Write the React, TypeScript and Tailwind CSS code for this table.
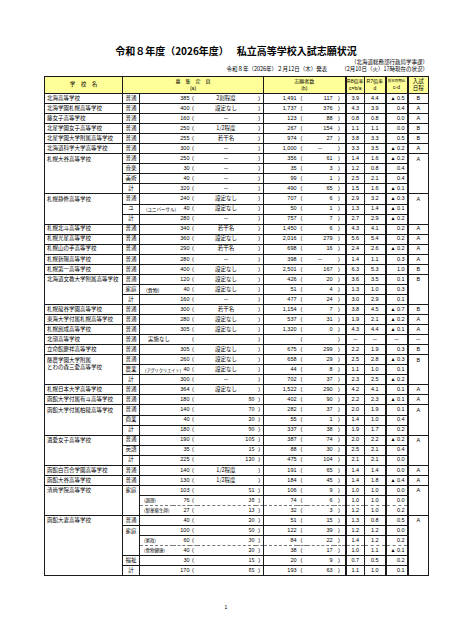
import React from "react";

type Row = {
  course?: string;
  courseSpan?: number;
  skipCourse?: boolean;
  note?: string;
  noteCls?: string;
  cap: string;
  capNote: string;
  capNum?: boolean;
  app: string;
  appSub: string;
  c: string;
  d: string;
  cd: string;
  dashed?: boolean;
};
type Group = { name: string[]; exam: string; rows: Row[] };

const r = (
  course: string | undefined,
  cap: string,
  capNote: string,
  app: string,
  appSub: string,
  c: string,
  d: string,
  cd: string,
  ex: Partial<Row> = {}
): Row => ({
  course,
  cap,
  capNote,
  capNum: /^\d+$/.test(capNote),
  app,
  appSub,
  c,
  d,
  cd,
  ...ex,
});

const SUB = "text-[4.5px] pl-[4px]";
const NOTE = "text-[4.5px] pl-[6px]";

const groups: Group[] = [
  { name: ["北海高等学校"], exam: "B", rows: [r("普通", "385", "2割程度", "1,491", "117", "3.9", "4.4", "▲ 0.5")] },
  { name: ["北海学園札幌高等学校"], exam: "A", rows: [r("普通", "400", "設定なし", "1,737", "376", "4.3", "3.9", "0.4")] },
  { name: ["藤女子高等学校"], exam: "A", rows: [r("普通", "160", "－", "123", "88", "0.8", "0.8", "0.0")] },
  { name: ["北星学園女子高等学校"], exam: "B", rows: [r("普通", "250", "1/2程度", "267", "154", "1.1", "1.1", "0.0")] },
  { name: ["北星学園大学附属高等学校"], exam: "B", rows: [r("普通", "255", "若干名", "974", "27", "3.8", "3.3", "0.5")] },
  { name: ["北海道科学大学高等学校"], exam: "A", rows: [r("普通", "300", "－", "1,000", "－", "3.3", "3.5", "▲ 0.2")] },
  {
    name: ["札幌大谷高等学校"],
    exam: "A",
    rows: [
      r("普通", "250", "－", "356", "61", "1.4", "1.6", "▲ 0.2"),
      r("音楽", "30", "－", "35", "3", "1.2", "0.8", "0.4"),
      r("美術", "40", "－", "99", "1", "2.5", "2.1", "0.4"),
      r("計", "320", "－", "490", "65", "1.5", "1.6", "▲ 0.1"),
    ],
  },
  {
    name: ["札幌静修高等学校"],
    exam: "A",
    rows: [
      r("普通", "240", "設定なし", "707", "6", "2.9", "3.2", "▲ 0.3"),
      r("ユ", "40", "設定なし", "50", "1", "1.3", "1.4", "▲ 0.1", { note: "(ユニバーサル)", noteCls: NOTE }),
      r("計", "280", "－", "757", "7", "2.7", "2.9", "▲ 0.2"),
    ],
  },
  { name: ["札幌北斗高等学校"], exam: "A", rows: [r("普通", "340", "若干名", "1,450", "6", "4.3", "4.1", "0.2")] },
  { name: ["札幌光星高等学校"], exam: "A", rows: [r("普通", "360", "設定なし", "2,016", "279", "5.6", "5.4", "0.2")] },
  { name: ["札幌山の手高等学校"], exam: "A", rows: [r("普通", "290", "若干名", "698", "16", "2.4", "2.6", "▲ 0.2")] },
  { name: ["札幌新陽高等学校"], exam: "A", rows: [r("普通", "280", "－", "398", "－", "1.4", "1.1", "0.3")] },
  { name: ["札幌第一高等学校"], exam: "B", rows: [r("普通", "400", "設定なし", "2,501", "167", "6.3", "5.3", "1.0")] },
  {
    name: ["北海道文教大学附属高等学校"],
    exam: "B",
    rows: [
      r("普通", "120", "設定なし", "426", "20", "3.6", "3.5", "0.1"),
      r("家庭", "40", "設定なし", "51", "4", "1.3", "1.0", "0.3", { note: "(食物)", noteCls: "text-[5px] pl-[6px]" }),
      r("計", "160", "－", "477", "24", "3.0", "2.9", "0.1"),
    ],
  },
  { name: ["札幌龍谷学園高等学校"], exam: "B", rows: [r("普通", "300", "若干名", "1,154", "7", "3.8", "4.5", "▲ 0.7")] },
  { name: ["東海大学付属札幌高等学校"], exam: "A", rows: [r("普通", "280", "設定なし", "537", "31", "1.9", "2.1", "▲ 0.2")] },
  { name: ["札幌創成高等学校"], exam: "A", rows: [r("普通", "305", "設定なし", "1,320", "0", "4.3", "4.4", "▲ 0.1")] },
  {
    name: ["北嶺高等学校"],
    exam: "－",
    rows: [r("普通", "", "", "", "", "－", "－", "－", { note: "実施なし", noteCls: "text-[5.5px] pl-[8px]" })],
  },
  { name: ["立命館慶祥高等学校"], exam: "B", rows: [r("普通", "305", "設定なし", "675", "299", "2.2", "1.9", "0.3")] },
  {
    name: ["酪農学園大学附属", "とわの森三愛高等学校"],
    exam: "B",
    rows: [
      r("普通", "260", "設定なし", "658", "29", "2.5", "2.8", "▲ 0.3"),
      r("農業", "40", "設定なし", "44", "8", "1.1", "1.0", "0.1", { note: "(アグリクリエイト)", noteCls: "text-[4.2px] pl-[5px]" }),
      r("計", "300", "－", "702", "37", "2.3", "2.5", "▲ 0.2"),
    ],
  },
  { name: ["札幌日本大学高等学校"], exam: "A", rows: [r("普通", "364", "設定なし", "1,522", "290", "4.2", "4.1", "0.1")] },
  { name: ["函館大学付属有斗高等学校"], exam: "A", rows: [r("普通", "180", "80", "402", "90", "2.2", "2.3", "▲ 0.1")] },
  {
    name: ["函館大学付属柏稜高等学校"],
    exam: "A",
    rows: [
      r("普通", "140", "70", "282", "37", "2.0", "1.9", "0.1"),
      r("商業", "40", "20", "55", "1", "1.4", "1.0", "0.4"),
      r("計", "180", "90", "337", "38", "1.9", "1.7", "0.2"),
    ],
  },
  {
    name: ["遺愛女子高等学校"],
    exam: "A",
    rows: [
      r("普通", "190", "105", "387", "74", "2.0", "2.2", "▲ 0.2"),
      r("英語", "35", "15", "88", "30", "2.5", "2.1", "0.4"),
      r("計", "225", "120", "475", "104", "2.1", "2.1", "0.0"),
    ],
  },
  { name: ["函館白百合学園高等学校"], exam: "A", rows: [r("普通", "140", "1/2程度", "191", "65", "1.4", "1.4", "0.0")] },
  { name: ["函館大谷高等学校"], exam: "A", rows: [r("普通", "130", "1/2程度", "184", "45", "1.4", "1.8", "▲ 0.4")] },
  {
    name: ["清尚学院高等学校"],
    exam: "A",
    rows: [
      r("家庭", "103", "51", "106", "9", "1.0", "1.0", "0.0", { courseSpan: 3 }),
      r(undefined, "76", "38", "74", "6", "1.0", "1.0", "0.0", { skipCourse: true, note: "(調理)", noteCls: SUB }),
      r(undefined, "27", "13", "32", "3", "1.2", "1.0", "0.2", { skipCourse: true, note: "(製菓衛生師)", noteCls: SUB, dashed: true }),
    ],
  },
  {
    name: ["函館大妻高等学校"],
    exam: "A",
    rows: [
      r("普通", "40", "20", "51", "15", "1.3", "0.8", "0.5"),
      r("家庭", "100", "50", "122", "39", "1.2", "1.2", "0.0", { courseSpan: 3 }),
      r(undefined, "60", "30", "84", "22", "1.4", "1.2", "0.2", { skipCourse: true, note: "(家政)", noteCls: SUB }),
      r(undefined, "40", "20", "38", "17", "1.0", "1.1", "▲ 0.1", { skipCourse: true, note: "(食物健康)", noteCls: SUB, dashed: true }),
      r("福祉", "30", "15", "20", "9", "0.7", "0.5", "0.2"),
      r("計", "170", "85", "193", "63", "1.1", "1.0", "0.1"),
    ],
  },
];

const widths = [78, 17, 33, 17, 7, 59, 8, 33, 10, 27, 12, 19, 21, 22, 21];

const B = "border-[#1a1a1a]";

export default function App() {
  return (
    <div className="w-[452px] h-[640px] bg-white text-black font-['Liberation_Sans','Noto_Sans_CJK_JP',sans-serif] overflow-hidden">
      <div className="ml-[44px] w-[384px] pt-[45px]">
        <div className="flex justify-center text-[10px] leading-[12px] font-bold font-['Noto_Sans_CJK_JP',sans-serif]">
          <span>令和８年度（2026年度）</span>
          <span className="ml-[8px]">私立高等学校入試志願状況</span>
        </div>
        <div className="mt-[1.5px] flex flex-col items-end text-[5.5px] leading-[7px] font-['Noto_Sans_CJK_JP',sans-serif]">
          <div>（北海道総務部行政局学事課）</div>
          <div className="flex">
            <span>令和８年（2026年）２月12日（木）発表</span>
            <span className="ml-[14px]">（2月10日（火）17時現在の状況）</span>
          </div>
        </div>
        <table className={`mt-[3.5px] w-[384px] table-fixed border-collapse border ${B} text-[5.5px] leading-none`}>
          <colgroup>
            {widths.map((w, i) => (
              <col key={i} style={{ width: w }} />
            ))}
          </colgroup>
          <thead>
            <tr className="h-[17px] bg-[#ffff99]">
              <th className={`border ${B} font-normal text-[5.5px] p-0`}>学　校　名</th>
              <th colSpan={6} className={`border ${B} font-normal text-[5px] p-0`}>
                <div>募　集　定　員</div>
                <div className="mt-[2px]">(a)</div>
              </th>
              <th colSpan={4} className={`border ${B} font-normal text-[5px] p-0`}>
                <div>志願者数</div>
                <div className="mt-[2px]">(b)</div>
              </th>
              <th className={`border-l-2 border-y ${B} font-normal text-[5px] p-0`}>
                <div>R8倍率</div>
                <div className="mt-[2px]">c=b/a</div>
              </th>
              <th className={`border ${B} font-normal text-[5px] p-0`}>
                <div>R7倍率</div>
                <div className="mt-[2px]">d</div>
              </th>
              <th className={`border-l-2 border-y ${B} font-normal p-0 whitespace-nowrap`}>
                <div className="text-[3.5px]">前年同期比</div>
                <div className="mt-[2px] text-[5px]">c-d</div>
              </th>
              <th className={`border-l-2 border-y border-r ${B} font-normal text-[5.5px] p-0`}>
                <div>入試</div>
                <div className="mt-[2px]">日程</div>
              </th>
            </tr>
          </thead>
          <tbody>
            {groups.map((g, gi) =>
              g.rows.map((row, ri) => {
                const nextDashed = g.rows[ri + 1]?.dashed;
                const ds =
                  (row.dashed ? " [border-top-style:dashed] border-t-[#777]" : "") +
                  (nextDashed ? " [border-bottom-style:dashed] border-b-[#777]" : "");
                const base = `border-y ${B} p-0 align-middle whitespace-nowrap overflow-visible${ds}`;
                const multi = g.rows.length > 1;
                return (
                  <tr key={`${gi}-${ri}`} className="h-[10.05px]">
                    {ri === 0 && (
                      <td
                        rowSpan={g.rows.length}
                        className={`border ${B} p-0 pl-[2px] whitespace-nowrap font-['Noto_Sans_CJK_JP',sans-serif] ${
                          multi ? "align-top pt-[2.5px]" : "align-middle"
                        }`}
                      >
                        {g.name.map((n, k) => (
                          <div key={k} className={k > 0 ? "mt-[1.5px]" : ""}>
                            {n}
                          </div>
                        ))}
                      </td>
                    )}
                    {!row.skipCourse && (
                      <td
                        rowSpan={row.courseSpan ?? 1}
                        className={`${base} border-x text-center font-['Noto_Sans_CJK_JP',sans-serif] ${
                          row.courseSpan ? "align-top pt-[2.5px]" : ""
                        }`}
                      >
                        {row.course}
                      </td>
                    )}
                    <td className={`${base} border-l text-left font-['Noto_Sans_CJK_JP',sans-serif] ${row.noteCls ?? ""}`}>
                      {row.note}
                    </td>
                    <td className={`${base} text-right`}>{row.cap}</td>
                    <td className={`${base} text-center`}>(</td>
                    <td
                      className={`${base} font-['Noto_Sans_CJK_JP',sans-serif] ${
                        row.capNum ? "text-right pr-[1px]" : "text-center"
                      }`}
                    >
                      {row.capNote}
                    </td>
                    <td className={`${base} text-center`}>)</td>
                    <td className={`${base} border-l text-right`}>{row.app}</td>
                    <td className={`${base} text-center`}>(</td>
                    <td
                      className={`${base} ${
                        row.appSub === "－" ? "text-center font-['Noto_Sans_CJK_JP',sans-serif]" : "text-right pr-[1px]"
                      }`}
                    >
                      {row.appSub}
                    </td>
                    <td className={`${base} text-center`}>)</td>
                    <td className={`${base} border-l-2 text-center`}>{row.c}</td>
                    <td className={`${base} border-l text-center`}>{row.d}</td>
                    <td
                      className={`${base} border-l-2 ${
                        row.cd === "－" ? "text-center" : "text-right pr-[2px]"
                      }`}
                    >
                      {row.cd.startsWith("▲") ? (
                        <span>
                          <span className="text-[5px]">▲</span>
                          <span className="ml-[1.5px]">{row.cd.slice(2)}</span>
                        </span>
                      ) : (
                        row.cd
                      )}
                    </td>
                    {ri === 0 && (
                      <td
                        rowSpan={g.rows.length}
                        className={`border-y border-r border-l-2 ${B} p-0 text-center ${multi ? "align-top pt-[2.5px]" : "align-middle"}`}
                      >
                        {g.exam}
                      </td>
                    )}
                  </tr>
                );
              })
            )}
          </tbody>
        </table>
        <div className="mt-[29px] text-center text-[5px] leading-none pr-[20px]">1</div>
      </div>
    </div>
  );
}
